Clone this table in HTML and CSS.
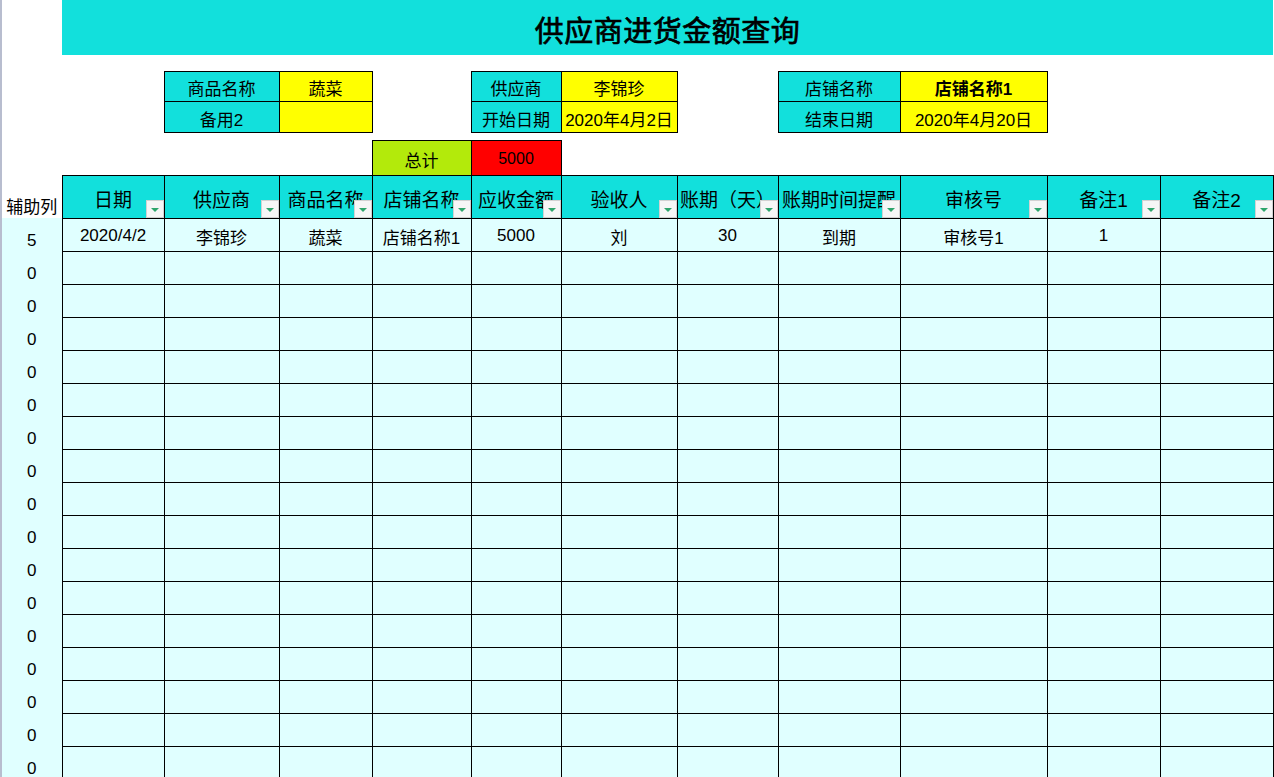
FILE: index.html
```html
<!DOCTYPE html>
<html lang="zh-CN">
<head>
<meta charset="utf-8">
<title>供应商进货金额查询</title>
<link rel="stylesheet" href="styles.css">
</head>
<body>
<div class="sheet">
<table class="grid">
  <colgroup>
    <col class="c-a"><col class="c-b"><col class="c-c"><col class="c-d"><col class="c-e"><col class="c-f"><col class="c-g"><col class="c-h"><col class="c-i"><col class="c-j"><col class="c-k"><col class="c-l">
  </colgroup>
  <tr class="r-title">
    <td></td>
    <td class="title" colspan="11">供应商进货金额查询</td>
  </tr>
  <tr class="r-gap1"><td colspan="12"></td></tr>
  <tr class="r-info1">
    <td></td><td></td>
    <td class="lbl">商品名称</td><td class="val">蔬菜</td>
    <td></td>
    <td class="lbl">供应商</td><td class="val">李锦珍</td>
    <td></td>
    <td class="lbl">店铺名称</td><td class="val bold">店铺名称1</td>
    <td></td><td></td>
  </tr>
  <tr class="r-info2">
    <td></td><td></td>
    <td class="lbl">备用2</td><td class="val"></td>
    <td></td>
    <td class="lbl">开始日期</td><td class="val">2020年4月2日</td>
    <td></td>
    <td class="lbl">结束日期</td><td class="val">2020年4月20日</td>
    <td></td><td></td>
  </tr>
  <tr class="r-gap2"><td colspan="12"></td></tr>
  <tr class="r-total">
    <td></td><td></td><td></td><td></td>
    <td class="sum-lbl">总计</td><td class="sum-val">5000</td>
    <td></td><td></td><td></td><td></td><td></td><td></td>
  </tr>
  <tr class="r-head">
    <td class="aux-hd">辅助列</td>
    <th><span class="ht">日期</span><span class="filter"></span></th>
    <th><span class="ht">供应商</span><span class="filter"></span></th>
    <th><span class="ht">商品名称</span><span class="filter"></span></th>
    <th><span class="ht">店铺名称</span><span class="filter"></span></th>
    <th><span class="ht">应收金额</span><span class="filter"></span></th>
    <th><span class="ht">验收人</span><span class="filter"></span></th>
    <th><span class="ht">账期（天）</span><span class="filter"></span></th>
    <th><span class="ht">账期时间提醒</span><span class="filter"></span></th>
    <th><span class="ht">审核号</span><span class="filter"></span></th>
    <th><span class="ht">备注1</span><span class="filter"></span></th>
    <th><span class="ht">备注2</span><span class="filter"></span></th>
  </tr>
  <tr class="r-data">
    <td class="aux">5</td>
    <td class="d">2020/4/2</td><td class="d">李锦珍</td><td class="d">蔬菜</td><td class="d">店铺名称1</td><td class="d">5000</td><td class="d">刘</td><td class="d">30</td><td class="d">到期</td><td class="d">审核号1</td><td class="d">1</td><td class="d"></td>
  </tr>
  <tr class="r-data"><td class="aux">0</td><td class="d"></td><td class="d"></td><td class="d"></td><td class="d"></td><td class="d"></td><td class="d"></td><td class="d"></td><td class="d"></td><td class="d"></td><td class="d"></td><td class="d"></td></tr>
  <tr class="r-data"><td class="aux">0</td><td class="d"></td><td class="d"></td><td class="d"></td><td class="d"></td><td class="d"></td><td class="d"></td><td class="d"></td><td class="d"></td><td class="d"></td><td class="d"></td><td class="d"></td></tr>
  <tr class="r-data"><td class="aux">0</td><td class="d"></td><td class="d"></td><td class="d"></td><td class="d"></td><td class="d"></td><td class="d"></td><td class="d"></td><td class="d"></td><td class="d"></td><td class="d"></td><td class="d"></td></tr>
  <tr class="r-data"><td class="aux">0</td><td class="d"></td><td class="d"></td><td class="d"></td><td class="d"></td><td class="d"></td><td class="d"></td><td class="d"></td><td class="d"></td><td class="d"></td><td class="d"></td><td class="d"></td></tr>
  <tr class="r-data"><td class="aux">0</td><td class="d"></td><td class="d"></td><td class="d"></td><td class="d"></td><td class="d"></td><td class="d"></td><td class="d"></td><td class="d"></td><td class="d"></td><td class="d"></td><td class="d"></td></tr>
  <tr class="r-data"><td class="aux">0</td><td class="d"></td><td class="d"></td><td class="d"></td><td class="d"></td><td class="d"></td><td class="d"></td><td class="d"></td><td class="d"></td><td class="d"></td><td class="d"></td><td class="d"></td></tr>
  <tr class="r-data"><td class="aux">0</td><td class="d"></td><td class="d"></td><td class="d"></td><td class="d"></td><td class="d"></td><td class="d"></td><td class="d"></td><td class="d"></td><td class="d"></td><td class="d"></td><td class="d"></td></tr>
  <tr class="r-data"><td class="aux">0</td><td class="d"></td><td class="d"></td><td class="d"></td><td class="d"></td><td class="d"></td><td class="d"></td><td class="d"></td><td class="d"></td><td class="d"></td><td class="d"></td><td class="d"></td></tr>
  <tr class="r-data"><td class="aux active">0<span class="row-mark"></span></td><td class="d"></td><td class="d"></td><td class="d"></td><td class="d"></td><td class="d"></td><td class="d"></td><td class="d"></td><td class="d"></td><td class="d"></td><td class="d"></td><td class="d"></td></tr>
  <tr class="r-data"><td class="aux">0</td><td class="d"></td><td class="d"></td><td class="d"></td><td class="d"></td><td class="d"></td><td class="d"></td><td class="d"></td><td class="d"></td><td class="d"></td><td class="d"></td><td class="d"></td></tr>
  <tr class="r-data"><td class="aux">0</td><td class="d"></td><td class="d"></td><td class="d"></td><td class="d"></td><td class="d"></td><td class="d"></td><td class="d"></td><td class="d"></td><td class="d"></td><td class="d"></td><td class="d"></td></tr>
  <tr class="r-data"><td class="aux">0</td><td class="d"></td><td class="d"></td><td class="d"></td><td class="d"></td><td class="d"></td><td class="d"></td><td class="d"></td><td class="d"></td><td class="d"></td><td class="d"></td><td class="d"></td></tr>
  <tr class="r-data"><td class="aux">0</td><td class="d"></td><td class="d"></td><td class="d"></td><td class="d"></td><td class="d"></td><td class="d"></td><td class="d"></td><td class="d"></td><td class="d"></td><td class="d"></td><td class="d"></td></tr>
  <tr class="r-data"><td class="aux">0</td><td class="d"></td><td class="d"></td><td class="d"></td><td class="d"></td><td class="d"></td><td class="d"></td><td class="d"></td><td class="d"></td><td class="d"></td><td class="d"></td><td class="d"></td></tr>
  <tr class="r-data"><td class="aux">0</td><td class="d"></td><td class="d"></td><td class="d"></td><td class="d"></td><td class="d"></td><td class="d"></td><td class="d"></td><td class="d"></td><td class="d"></td><td class="d"></td><td class="d"></td></tr>
  <tr class="r-data"><td class="aux">0</td><td class="d"></td><td class="d"></td><td class="d"></td><td class="d"></td><td class="d"></td><td class="d"></td><td class="d"></td><td class="d"></td><td class="d"></td><td class="d"></td><td class="d"></td></tr>
  <tr class="r-data"><td class="aux">0</td><td class="d"></td><td class="d"></td><td class="d"></td><td class="d"></td><td class="d"></td><td class="d"></td><td class="d"></td><td class="d"></td><td class="d"></td><td class="d"></td><td class="d"></td></tr>
</table>
</div>
</body>
</html>
```

FILE: styles.css
```css
html, body {
  margin: 0;
  padding: 0;
  background: #ffffff;
  overflow: hidden;
}

body {
  font-family: "Liberation Sans", "Noto Sans CJK SC", sans-serif;
  color: #000000;
}

.sheet {
  width: 1274px;
  height: 777px;
  overflow: hidden;
  border-left: 2px solid #b8bdcf;
  box-sizing: border-box;
}

.grid {
  border-collapse: collapse;
  table-layout: fixed;
  width: 1271px;
}

.grid td, .grid th {
  padding: 0;
  text-align: center;
  white-space: nowrap;
  overflow: hidden;
  font-weight: normal;
}

.c-a { width: 60px; }
.c-b { width: 102px; }
.c-c { width: 115px; }
.c-d { width: 93px; }
.c-e { width: 99px; }
.c-f { width: 90px; }
.c-g { width: 116px; }
.c-h { width: 101px; }
.c-i { width: 122px; }
.c-j { width: 147px; }
.c-k { width: 113px; }
.c-l { width: 113px; }

.r-title { height: 55px; }
.r-gap1 { height: 16px; }
.r-info1 { height: 30px; }
.r-info2 { height: 31px; }
.r-gap2 { height: 8px; }
.r-total { height: 35px; }
.r-head { height: 43px; }
.r-data { height: 33px; }

.title {
  background: #12e0dc;
  font-size: 29px;
  font-weight: bold;
  letter-spacing: 0.5px;
  padding-top: 2px !important;
  -webkit-text-stroke: 0.7px #000000;
}

.lbl, .val, .sum-lbl, .sum-val {
  border: 1px solid #000000;
  font-size: 17px;
  padding-top: 3px !important;
}

.lbl { background: #12e0dc; }
.val { background: #ffff00; }
.val.bold { font-weight: bold !important; }

.sum-lbl { background: #b3ea0b; }
.sum-val { background: #ff0000; font-size: 16px; }

.r-head th {
  background: #12e0dc;
  border: 1px solid #000000;
  font-size: 19px;
  position: relative;
  padding-top: 3px;
}

.ht {
  display: block;
}

.filter {
  position: absolute;
  right: 0;
  bottom: 0;
  width: 18px;
  height: 18px;
  box-sizing: border-box;
  background: #f6f6f6;
  border: 1px solid #d2d2d2;
}

.filter::after {
  content: "";
  position: absolute;
  left: 4px;
  top: 7px;
  border-left: 4px solid transparent;
  border-right: 4px solid transparent;
  border-top: 4px solid #2ea56c;
}

.aux-hd {
  font-size: 17px;
  vertical-align: bottom;
}

.aux {
  background: #e0ffff;
  font-size: 17px;
  vertical-align: bottom;
  position: relative;
  overflow: visible !important;
}

.d {
  background: #e0ffff;
  border: 1px solid #000000;
  font-size: 17px;
  padding-top: 3px !important;
}

.row-mark {
  position: absolute;
  left: -2px;
  top: 0;
  width: 2px;
  height: 33px;
  background: #1fa870;
}
```
